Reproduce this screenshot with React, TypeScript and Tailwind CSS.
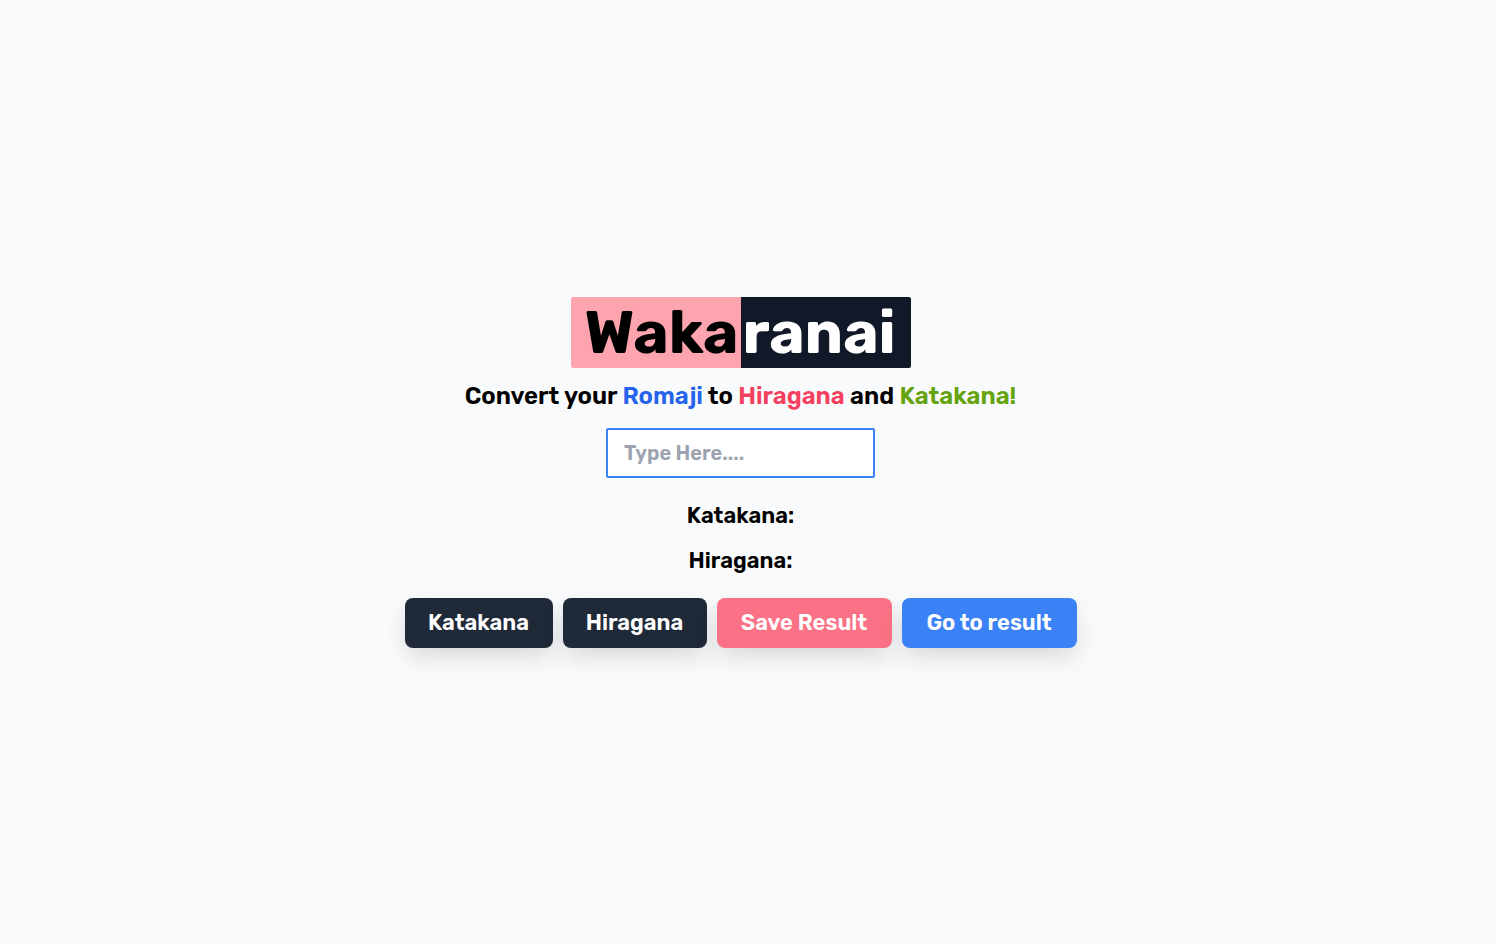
import { useState } from "react";

const buttonBase =
  "h-[50px] cursor-pointer rounded-lg text-center text-[22px] font-semibold whitespace-nowrap text-white shadow-[0_10px_24px_-2px_rgb(0_0_0/0.14)]";

export default function App() {
  const [text, setText] = useState("");

  return (
    <main className="flex min-h-screen flex-col items-center justify-center bg-[#f9fafb] pr-[15px] font-['Rubik','Inter',sans-serif] font-semibold text-black">
      <h1 className="flex overflow-hidden rounded-xs text-6xl leading-[71px] font-bold">
        <span className="w-[170px] bg-[#fda4af] pr-0.5 text-right">Waka</span>
        <span className="w-[170px] bg-[#111827] pl-0.5 text-left text-white">ranai</span>
      </h1>
      <h2 className="mt-3 text-center text-2xl font-semibold">
        Convert your <span className="text-[#2563eb]">Romaji</span> to{" "}
        <span className="text-[#f43f5e]">Hiragana</span> and{" "}
        <span className="text-[#65a30d]">Katakana!</span>
      </h2>
      <input
        type="text"
        aria-label="Romaji text"
        placeholder="Type Here...."
        value={text}
        onChange={(event) => setText(event.target.value)}
        className="mt-4 h-[50px] w-[269px] rounded-xs border-2 border-[#3b82f6] bg-white px-4 text-xl font-semibold outline-none placeholder:text-[#9ca3af]"
      />
      <div className="mt-[21px] flex flex-col gap-3 text-center text-[22px] leading-[33px]">
        <p>Katakana:</p>
        <p>Hiragana:</p>
      </div>
      <div className="mt-[21px] flex flex-wrap justify-center gap-2.5">
        <button type="button" className={`${buttonBase} w-[148px] bg-[#1f2937]`}>
          Katakana
        </button>
        <button type="button" className={`${buttonBase} w-36 bg-[#1f2937]`}>
          Hiragana
        </button>
        <button type="button" className={`${buttonBase} w-[175px] bg-[#fb7185]`}>
          Save Result
        </button>
        <button type="button" className={`${buttonBase} w-[175px] bg-[#3b82f6]`}>
          Go to result
        </button>
      </div>
    </main>
  );
}
